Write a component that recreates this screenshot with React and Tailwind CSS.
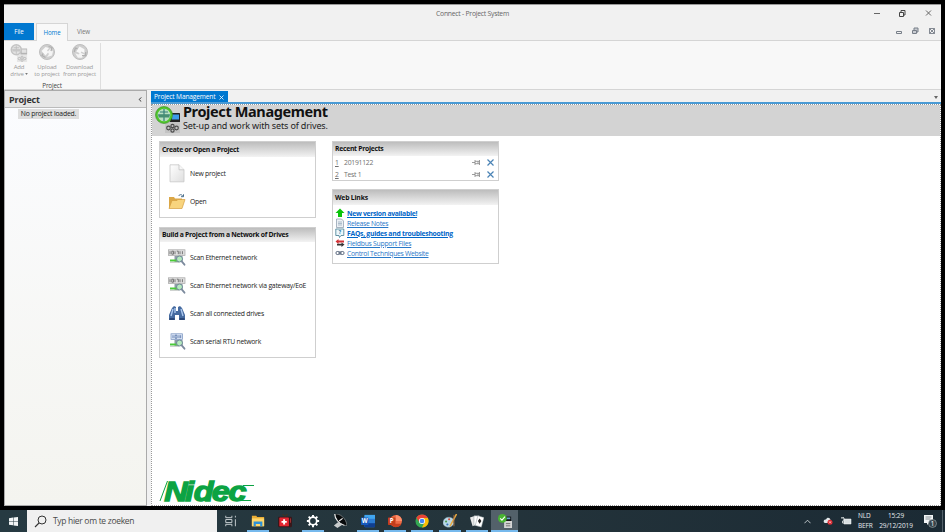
import React from "react";

const UI = "font-['Open_Sans','Noto_Sans',sans-serif]";

function DriveGlyph({ gray, className }) {
  const ring = gray ? "#c4c4c4" : "#4fc52b";
  return (
    <svg viewBox="0 0 26 28" className={className}>
      <rect x="10" y="17" width="15" height="11" fill={gray ? "#e6e6e6" : "#c3c3c3"} />
      <rect x="15" y="8" width="10" height="9" rx="0.5" fill={gray ? "#b5b5b5" : "#222"} />
      <rect x="17" y="9.5" width="7" height="5" fill={gray ? "#e2e2e2" : "#3d9bea"} />
      <circle cx="9" cy="10" r="7.4" fill={gray ? "#e3e3e3" : "#b9dfc0"} stroke={ring} strokeWidth="2.2" />
      {!gray && <circle cx="9" cy="10" r="8.5" fill="none" stroke="#3b8a2a" strokeWidth=".6" />}
      <path d="M3 10h12M9 4v12M5 7h8" stroke={gray ? "#bdbdbd" : "#347e79"} strokeWidth="1.2" fill="none" />
      <path d="M3.500 9.500h11v3h-11z" fill={gray ? "#c7c7c7" : "#478e72"} />
      <g fill="none" stroke={gray ? "#b5b5b5" : "#4a4a4a"} strokeWidth="1.2">
        <circle cx="13.5" cy="23" r="1.8" />
        <circle cx="17.5" cy="21" r="1.6" />
        <circle cx="21.5" cy="23" r="1.8" />
        <circle cx="17.5" cy="25.5" r="1.6" />
      </g>
    </svg>
  );
}

function Globe({ down }) {
  return (
    <svg viewBox="0 0 18 18" className="h-[18px] w-[18px]">
      <circle cx="9" cy="9" r="7.5" fill="#cfcfcf" stroke="#bfbfbf" strokeWidth="1" />
      <g transform={down ? "rotate(75 9 9)" : undefined}>
        <path d="M3.500 8l4-4 3.500 1-2 2.500 1.500 1.500-3 3.500z" fill="#f8f8f8" />
        <path d="M9 14l2-3-1.500-2 3-3.500 2.500 3-1 4z" fill="#f4f4f4" />
        <path d="M10.500 3.500l3.500 1-1 3.500M7.500 14.500L4 12.500l1-2" fill="none" stroke="#b0b0b0" strokeWidth="1.300" />
      </g>
    </svg>
  );
}

function NetIcon({ serial }) {
  return (
    <svg viewBox="0 0 18 17" className="h-[17px] w-[18px]">
      <rect x={serial ? 3 : 0.4} y="0.8" width={serial ? 11.5 : 16.6} height="5.6" fill={serial ? "#dce6f6" : "#dedede"} stroke={serial ? "#7490bd" : "#a5a5a5"} strokeWidth=".7" />
      <path d={serial ? "M5 2.2v3M7 2.2h2v3h-2zM11 2.2v3M12.7 2.2v3" : "M2 2.2v3M3.8 2.2h1.7v3H3.8zM7 2.2v3M8.8 2.2h1.5v3M12 2.2v3M14.4 2.2v3"} stroke={serial ? "#5877a9" : "#6b6b6b"} strokeWidth=".9" fill="none" />
      <path d="M6.5 7h8v6h-8z" fill="#8f9ca6" />
      <path d="M2 11.5h8" stroke="#4acb38" strokeWidth="2" />
      <path d="M2 13.3h9" stroke="#b4b9b5" strokeWidth=".8" />
      <circle cx="11.5" cy="10" r="3" fill="#b5e9bd" stroke="#6f8a98" strokeWidth="1" />
      <path d="M13.5 12.2l3 3.5" stroke="#7c8a9d" strokeWidth="1.8" strokeLinecap="round" />
    </svg>
  );
}

function Binoculars() {
  return (
    <svg viewBox="0 0 18 17" className="h-[17px] w-[18px]">
      <path d="M4 3l2-2 2 1v4h2V2l2-1 2 2 3 7v5h-6v-5H7v5H1v-5z" fill="#456a9f" />
      <path d="M5 4L3 11M13 4l2 7M7 3v5" stroke="#a9c6ed" strokeWidth="1.4" />
      <path d="M1.5 14h5M11.5 14h5" stroke="#223d6c" strokeWidth="1.5" />
    </svg>
  );
}

function PageIcon() {
  return (
    <svg viewBox="0 0 18 19" className="h-[19px] w-[18px]">
      <defs><linearGradient id="pg" x2="1" y2="1"><stop stopColor="#fff" /><stop offset="1" stopColor="#dedede" /></linearGradient></defs>
      <path d="M2 .8h9l5 5v12H2z" fill="url(#pg)" stroke="#c6c6c6" strokeWidth=".8" />
      <path d="M11 .8v5h5" fill="#f6f6f6" stroke="#bdbdbd" strokeWidth=".7" />
    </svg>
  );
}

function FolderIcon() {
  return (
    <svg viewBox="0 0 18 17" className="h-[17px] w-[18px]">
      <path d="M1 4h5l1 1.5h7V15H1z" fill="#dba747" />
      <path d="M1 15.5L4 7.5h5l1-1h7l-3 9z" fill="#f8d47e" stroke="#d69e3d" strokeWidth=".7" />
      <path d="M10.5 3c1.5-2 3.500-1.700 4.500.5M13 3.700h2.500V1.300" fill="none" stroke="#4b6f8d" strokeWidth="1" />
    </svg>
  );
}

function Card({ title, head, tracking, className, children }) {
  return (
    <section className={`flex flex-col border border-[#cfcfcf] bg-white ${className}`}>
      <h2 className={`flex shrink-0 items-center whitespace-nowrap bg-gradient-to-b from-[#bdbdbd] to-[#f3f3f3] pl-[2px] pt-px text-[6.8px] font-bold leading-none text-[#111] ${tracking} ${head}`}>{title}</h2>
      {children}
    </section>
  );
}

function Action({ icon, label, className }) {
  return (
    <div className={`flex items-center pl-2 ${className}`}>
      <span className="flex w-[22px] shrink-0">{icon}</span>
      <span className="whitespace-nowrap pt-[2px] text-[6.8px] leading-none tracking-[-0.23px] text-[#222]">{label}</span>
    </div>
  );
}

function Recent({ n, name }) {
  return (
    <div className="flex h-3 items-center pl-[2px] pr-[4px] text-[6.8px] leading-none tracking-[-0.25px] text-[#707070]">
      <span className="w-[9px] pt-[2px] underline">{n}</span>
      <span className="flex-1 pt-[2px]">{name}</span>
      <svg viewBox="0 0 9 7" className="mr-[6px] h-[7px] w-[9px]"><path d="M0 3.5h3M3 1v5M3 2.3h3v2.4H3M7.5 1v5M6 2.3h1.5M6 4.7h1.5" stroke="#858585" strokeWidth=".8" fill="none" /></svg>
      <svg viewBox="0 0 7 7" className="h-[7px] w-[7px]"><path d="M.5 .5l6 6M6.500 .5l-6 6" stroke="#4a83b5" strokeWidth="1.2" /></svg>
    </div>
  );
}

function WebLink({ icon, label, text }) {
  return (
    <div className="flex h-[10px] items-center pl-[2px]">
      <svg viewBox="0 0 10 10" className="mr-[2px] h-[10px] w-[10px] shrink-0">{icon}</svg>
      <span className={`whitespace-nowrap pt-[2px] text-[6.8px] leading-none underline ${text}`}>{label}</span>
    </div>
  );
}

function RibbonButton({ icon, a, b, arrow, className }) {
  return (
    <div className={`flex flex-col items-center text-[6.2px] leading-none tracking-[-0.15px] text-[#9a9a9a] ${className}`}>
      {icon}
      <span className="mt-px flex h-[7px] items-center whitespace-nowrap text-[6px] leading-none">{a}</span>
      <span className="flex h-[7px] items-center whitespace-nowrap text-[6px] leading-none">{b}{arrow && <svg viewBox="0 0 4 3" className="ml-[1px] h-[2px] w-[3px]"><path d="M0 0h4L2 3z" fill="#777" /></svg>}</span>
    </div>
  );
}

const taskIcons = [
  { g: <path d="M2 2v2.2h7V2M2 14v-2.200h7V14M2 6.300h7v3.500H2zM13 2v2M13 6v8" stroke="#c7ced1" strokeWidth="1.1" fill="none" /> },
  { line: true, g: <><path d="M1 2h5l1 1.500h8V14H1z" fill="#e9ad35" /><path d="M1 5h14v9H1z" fill="#ffd76b" /><path d="M3 14V8.500h10V14h-2.500v-2.500h-5V14z" fill="#2d91d8" /></> },
  { g: <><path d="M5 0l3 3 3-3" stroke="#432" strokeWidth="1.200" fill="none" /><rect x="0" y="3" width="16" height="12" rx="1.500" fill="#38171a" /><rect x="1.500" y="4" width="11" height="10" rx="1" fill="#e32631" /><path d="M7 6v6M4 9h6" stroke="#fff" strokeWidth="2.200" /><path d="M14.300 5v5" stroke="#a33" strokeWidth="1" /></> },
  { line: true, g: <><circle cx="8" cy="8" r="4.300" fill="none" stroke="#fff" strokeWidth="2" /><path d="M8 1v2.500M8 12.500V15M1 8h2.500M12.500 8H15M3 3l2 2M11 11l2 2M13 3l-2 2M5 11l-2 2" stroke="#fff" strokeWidth="2.200" /></> },
  { g: <><path d="M2 0c6-1 13 5 14 13-5 1-13-4-14-13z" fill="#080b0d" stroke="#8a8f91" strokeWidth=".8" /><path d="M2 0c0 6 5 11 11 13" stroke="#eee" strokeWidth="1.200" fill="none" /><path d="M6 9l-5 4 4 3 6-4z" fill="#c9cccd" /><path d="M7 8l4-3" stroke="#fff" strokeWidth="1.200" /></> },
  { line: true, word: "W", g: <><rect x="4" y="1" width="12" height="14" rx="1" fill="#2b7cd3" /><path d="M4 1h12v4.500H4z" fill="#41a5ee" /><path d="M4 10.500h12V15H4z" fill="#103f91" /><rect x="0" y="4" width="8.500" height="8.500" rx=".7" fill="#185abd" /></> },
  { line: true, word: "P", g: <><circle cx="9" cy="8" r="7" fill="#ed6c47" /><path d="M9 1a7 7 0 017 7H9z" fill="#ff8f6b" /><path d="M3 11h12.500A7 7 0 013 11z" fill="#c9401f" /><rect x="0" y="4" width="8.500" height="8.500" rx=".7" fill="#c43e1c" /></> },
  { line: true, g: <><circle cx="8" cy="8" r="7.500" fill="#34a853" /><path d="M8 4.700h6.800A7.500 7.500 0 018 15.500l3-6z" fill="#fbbc05" /><path d="M1.500 4.400L5.300 9.700 8 4.700H14.800A7.500 7.500 0 001.500 4.400z" fill="#ea4335" /><circle cx="8" cy="8" r="3.500" fill="#fff" /><circle cx="8" cy="8" r="2.700" fill="#4285f4" /></> },
  { line: true, g: <><path d="M0 10c0-6 7-8 11-5 2 2 0 3 1 5s-3 6-7 5-5-3-5-5z" fill="#b9d8e8" stroke="#788f9a" strokeWidth=".5" /><circle cx="3.500" cy="8.500" r="1.200" fill="#4f9b52" /><circle cx="7" cy="6" r="1.200" fill="#d14a3b" /><circle cx="5" cy="12" r="1.200" fill="#356eb7" /><path d="M15.500 0L8 14" stroke="#e7a83f" strokeWidth="1.800" /><path d="M12.500 1v13" stroke="#ad754a" strokeWidth="1" /></> },
  { line: true, g: <><path d="M0 4l6-2 3 9-6 3z" fill="#e8e8e8" /><path d="M4.500 2h6v11h-6z" fill="#fff" stroke="#7a878d" strokeWidth=".5" /><path d="M9 2l7 2-3 11-7-2z" fill="#fff" stroke="#7a878d" strokeWidth=".5" /><path d="M11 5l2 3-2 3-2-3z" fill="#222" /></> },
  { active: true, g: <><rect x="7" y="8" width="9" height="8" fill="#d5d5d5" /><rect x="9" y="3" width="6" height="5" fill="#111" /><path d="M10 4h4v2h-4z" fill="#6aa6d5" /><circle cx="5" cy="5" r="5" fill="#48b332" /><path d="M2.500 5l2 2L8 3" stroke="#fff" strokeWidth="1.300" fill="none" /><path d="M9 11h5M9 13.500h5" stroke="#666" strokeWidth="1" /></> },
];

function Taskbar() {
  return (
    <footer className="flex h-[22px] shrink-0 bg-gradient-to-r from-[#263a42] via-[#24343b] to-[#1b2a34] text-white">
      <div className="flex w-[27px] items-center justify-center">
        <svg viewBox="0 0 9 9" className="h-[9px] w-[9px]"><path d="M0 1.200L4 .6v3.600H0zM4.500.5L9 0v4.200H4.500zM0 4.700h4v3.600L0 7.700zM4.500 4.700H9V9l-4.500-.6z" fill="#f2f5f6" /></svg>
      </div>
      <div className="flex w-[190px] items-center bg-[#f0f0f0] pl-[7px] text-[#4a4a4a]">
        <svg viewBox="0 0 13 13" className="h-[13px] w-[13px]"><circle cx="8" cy="5" r="4" fill="none" stroke="#333" strokeWidth="1" /><path d="M5 8l-4 4" stroke="#333" strokeWidth="1.100" /></svg>
        <span className="ml-[6px] text-[8.5px] leading-none tracking-[-0.31px]">Typ hier om te zoeken</span>
      </div>
      {taskIcons.map((t, i) => (
        <div key={i} className={`flex w-[27.4px] flex-col items-center ${t.active ? "bg-[#53616a]" : ""}`}>
          <svg viewBox="0 0 16 16" className="mt-[4px] h-[14px] w-[14px]">{t.g}{t.word && <text x="4.200" y="10.800" fontSize="7" fontWeight="700" fill="#fff" textAnchor="middle">{t.word}</text>}</svg>
          <span className={`mt-auto h-[2px] ${t.active ? "w-full bg-[#76b9ed]" : t.line ? "w-[22px] bg-[#76b9ed]" : "w-0"}`} />
        </div>
      ))}
      <div className="ml-auto flex items-center text-[6.5px] leading-[10px] tracking-[-0.1px] text-[#e5eaed]">
        <svg viewBox="0 0 8 5" className="mr-[12px] h-[5px] w-[7px]"><path d="M.5 4.500L4 1l3.500 3.500" stroke="#d4dadd" fill="none" /></svg>
        <svg viewBox="0 0 10 8" className="mr-[8px] h-[8px] w-[10px]"><path d="M1 5.500C0 3 2 2.500 3 2.500 4 0 7 .5 7.500 3L6 6H2z" fill="#e3e8ea" /><circle cx="7" cy="5.300" r="2.500" fill="#dc2830" /><path d="M6 4.300l2 2M8 4.300l-2 2" stroke="#fff" strokeWidth=".6" /></svg>
        <svg viewBox="0 0 11 8" className="mr-[6px] h-[8px] w-[11px]"><path d="M3 2h7v5H3z" fill="#d8dee1" stroke="#fff" strokeWidth=".5" /><path d="M0 1h3v3H1.500v2H4M1 0v1M2.300 0v1" fill="none" stroke="#e3e7e9" strokeWidth=".8" /></svg>
        <div className="w-[20px]"><div>NLD</div><div>BEFR</div></div>
        <div className="w-[36px] whitespace-nowrap text-center"><div>15:29</div><div>29/12/2019</div></div>
        <svg viewBox="0 0 14 14" className="ml-[9px] mr-[5px] h-[14px] w-[14px]"><path d="M1 1h9v8H6L4 11V9H1z" fill="#f2f4f5" /><path d="M2.500 3h6M2.500 5h5" stroke="#69757c" strokeWidth=".8" /><circle cx="9.500" cy="9.500" r="4" fill="#36434a" stroke="#a8b0b4" strokeWidth=".6" /><text x="9.500" y="12" textAnchor="middle" fontSize="7" fill="#fff">1</text></svg>
        <span className="h-[22px] w-[3px] border-l border-[#53616a]" />
      </div>
    </footer>
  );
}

export default function App() {
  return (
    <div className={`flex h-[532px] w-[945px] flex-col overflow-hidden bg-black ${UI}`}>
      <div className="mx-[4px] mt-[4px] flex h-[502px] w-[937px] flex-col bg-[#f1f1f1]">
        <header className="flex h-[19px] items-center border-t border-[#999] text-[#666]">
          <span className="w-[160px]" />
          <span className="flex-1 pl-[272px] text-[6.8px] leading-none tracking-[-0.24px]">Connect - Project System</span>
          <svg viewBox="0 0 60 8" className="mb-[2px] mr-[9px] h-[8px] w-[60px]"><path d="M2 4.500h6M54 1.500l5 5M59 1.500l-5 5" stroke="#666" /><path d="M27.500 3.500h4v4h-4zM29 3.500V1.500h4v4.500h-1.500" stroke="#444" fill="none" strokeWidth="1" /></svg>
        </header>
        <nav className="flex h-[18px] items-end border-b border-[#d5d5d5] text-[6.2px] leading-none tracking-[-0.1px]">
          <div className="flex h-[17px] w-[30px] items-center justify-center bg-[#0078d0] pt-[2px] text-white">File</div>
          <div className="-mb-px ml-[2px] flex h-[18px] w-[32px] items-center justify-center border border-b-0 border-[#d5d5d5] bg-[#f8f8f8] pt-px text-[#0078d0]">Home</div>
          <div className="flex h-[17px] w-[31px] items-center justify-center pt-[2px] text-[#777]">View</div>
          <svg viewBox="0 0 42 8" className="mb-[5px] ml-auto mr-[4px] h-[8px] w-[42px]" fill="none" stroke="#777e88"><path d="M1.500 4.500h5v2h-5z" /><path d="M17.500 3.500h4v3h-4zM19 3V1h4v4h-1.500" fill="#c9ccd2" /><path d="M34.500 1.500h5v5h-5zM34.500 1.500l5 5M39.500 1.500l-5 5" strokeWidth=".9" /></svg>
        </nav>
        <div className="flex h-[49px] border-b border-[#d5d5d5] bg-[#f8f8f8] pt-[2px]">
          <div className="flex w-[97px] flex-col border-r border-[#dedede]">
            <div className="flex">
              <RibbonButton className="w-[30px]" icon={<DriveGlyph gray className="h-[19px] w-[18px]" />} a="Add" b="drive" arrow />
              <RibbonButton className="w-[26px]" icon={<span className="flex h-[19px]"><Globe /></span>} a="Upload" b="to project" />
              <RibbonButton className="w-[39px]" icon={<span className="flex h-[19px]"><Globe down /></span>} a="Download" b="from project" />
            </div>
            <div className="mt-[5px] text-center text-[6.3px] leading-[7px] tracking-[-0.15px] text-[#444]">Project</div>
          </div>
        </div>
        <main className="flex h-[416px]">
          <aside className="flex w-[143px] flex-col border border-[#aaa] bg-gradient-to-b from-[#fbfcff] to-[#f4f4ef]">
            <div className="flex h-[17px] shrink-0 items-center justify-between border-b border-[#bbb] bg-[#e6e6e6] pl-[4px] pr-[4px]">
              <span className="text-[9px] font-bold leading-none tracking-[-0.15px] text-[#333]">Project</span>
              <svg viewBox="0 0 4 6" className="h-[5px] w-[4px]"><path d="M3.500 .5L1 3l2.500 2.500" stroke="#333" strokeWidth="1.200" fill="none" /></svg>
            </div>
            <div className="ml-[13px] mt-px flex h-[10px] w-[61px] items-center justify-center bg-[#dedede] pt-px text-[6.8px] leading-none tracking-[-0.17px] text-[#222]">No project loaded.</div>
          </aside>
          <div className="ml-[4px] flex flex-1 flex-col">
            <div className="flex h-[14px] items-end justify-between border-b-2 border-[#4a9ad4]">
              <div className="flex h-[11px] w-[77px] items-center justify-between whitespace-nowrap bg-[#0078d0] pl-[3px] pr-[4px] pt-px text-[6.6px] leading-none tracking-[-0.14px] text-white">
                <span>Project Management</span>
                <svg viewBox="0 0 5 5" className="h-[5px] w-[5px]"><path d="M.5 .5l4 4M4.500 .5l-4 4" stroke="#fff" strokeWidth=".8" /></svg>
              </div>
              <svg viewBox="0 0 4 3" className="mb-[3px] mr-[3px] h-[3px] w-[4px]"><path d="M0 0h4L2 3z" fill="#666" /></svg>
            </div>
            <div className="flex flex-1 flex-col border border-dotted border-[#999] bg-white">
              <div className="flex h-[31px] shrink-0 bg-[#d3d3d3] pl-[3px]">
                <DriveGlyph className="h-[28px] w-[26px]" />
                <div className="ml-[2px] flex flex-col">
                  <h1 className="h-[14px] whitespace-nowrap font-['Noto_Sans',sans-serif] text-[14.5px] font-bold leading-[13px] tracking-[-0.38px] text-[#111]">Project Management</h1>
                  <p className="mt-px font-['Noto_Sans',sans-serif] text-[9px] leading-[11px] tracking-[-0.15px] text-[#222]">Set-up and work with sets of drives.</p>
                </div>
              </div>
              <div className="flex items-start gap-[16px] pl-[7px] pt-[5px]">
                <div className="flex w-[157px] flex-col gap-[9px]">
                  <Card title="Create or Open a Project" tracking="tracking-[-0.26px]" head="h-[15px]" className="h-[77px]">
                    <Action className="mt-[2px] h-[28px]" icon={<PageIcon />} label="New project" />
                    <Action className="h-[28px]" icon={<FolderIcon />} label="Open" />
                  </Card>
                  <Card title="Build a Project from a Network of Drives" tracking="tracking-[-0.26px]" head="h-[14px]" className="h-[131px]">
                    <Action className="mt-[2px] h-[27.75px]" icon={<NetIcon />} label="Scan Ethernet network" />
                    <Action className="h-[27.75px]" icon={<NetIcon />} label="Scan Ethernet network via gateway/EoE" />
                    <Action className="h-[27.75px]" icon={<Binoculars />} label="Scan all connected drives" />
                    <Action className="h-[27.75px]" icon={<NetIcon serial />} label="Scan serial RTU network" />
                  </Card>
                </div>
                <div className="flex w-[167px] flex-col gap-[8px]">
                  <Card title="Recent Projects" tracking="tracking-[-0.28px]" head="h-[14px]" className="h-[40px]">
                    <Recent n="1" name="20191122" />
                    <Recent n="2" name="Test 1" />
                  </Card>
                  <Card title="Web Links" tracking="tracking-[-0.2px]" head="h-[15px]" className="h-[75px]">
                    <div className="mt-[3px] flex flex-col">
                      <WebLink label="New version available!" text="font-bold tracking-[-0.3px] text-[#0066c8]" icon={<path d="M5 .5l4.500 4.500H7v4H3V5H.5z" fill="#0bc40b" />} />
                      <WebLink label="Release Notes" text="tracking-[-0.27px] text-[#2878c8]" icon={<><path d="M1.500 1h5l2 2v6.500h-7z" fill="#edf1f5" stroke="#8797a8" strokeWidth=".7" /><path d="M3 4h4M3 5.500h4M3 7h4" stroke="#8298ad" strokeWidth=".6" /></>} />
                      <WebLink label="FAQs, guides and troubleshooting" text="font-bold tracking-[-0.26px] text-[#0066c8]" icon={<><path d="M.8 1h8v6.500H6L4.500 9.500 4 7.500H.8z" fill="#ecf7fc" stroke="#427b91" strokeWidth=".8" /><text x="5" y="6.300" fontSize="5" fontWeight="700" textAnchor="middle" fill="#2178a7">?</text></>} />
                      <WebLink label="Fieldbus Support Files" text="tracking-[-0.24px] text-[#2878c8]" icon={<><path d="M.5 3.500l3-2.500v1.500H9v2H3.500V6z" fill="#d23135" /><path d="M9.500 6.500l-3-2v1.200H2v1.800h4.500V9z" fill="#353535" /></>} />
                      <WebLink label="Control Techniques Website" text="tracking-[-0.28px] text-[#2878c8]" icon={<><rect x="1" y="3.500" width="4" height="3" rx="1.300" fill="none" stroke="#57657b" strokeWidth="1" /><rect x="5" y="3.500" width="4" height="3" rx="1.300" fill="none" stroke="#57657b" strokeWidth="1" /><path d="M3 5h4" stroke="#57657b" /></>} />
                    </div>
                  </Card>
                </div>
              </div>
              <svg viewBox="0 0 98 26" className="mb-px ml-[7px] mt-auto h-[26px] w-[98px] overflow-visible">
                <g transform="scale(1.16 1)">
                  <text x="4.500 22.500 30 45.500 60" y="22.600" fontFamily="Liberation Sans" fontSize="28" fontWeight="700" fontStyle="italic" fill="#0ca343" stroke="#0ca343" strokeWidth="1.300">Nidec</text>
                </g>
                <path d="M1 23L8.500 3M84 7.500h11M82 22.500h10" stroke="#0ca343" strokeWidth="1" />
              </svg>
            </div>
          </div>
        </main>
      </div>
      <div className="h-[4px] shrink-0" />
      <Taskbar />
    </div>
  );
}
